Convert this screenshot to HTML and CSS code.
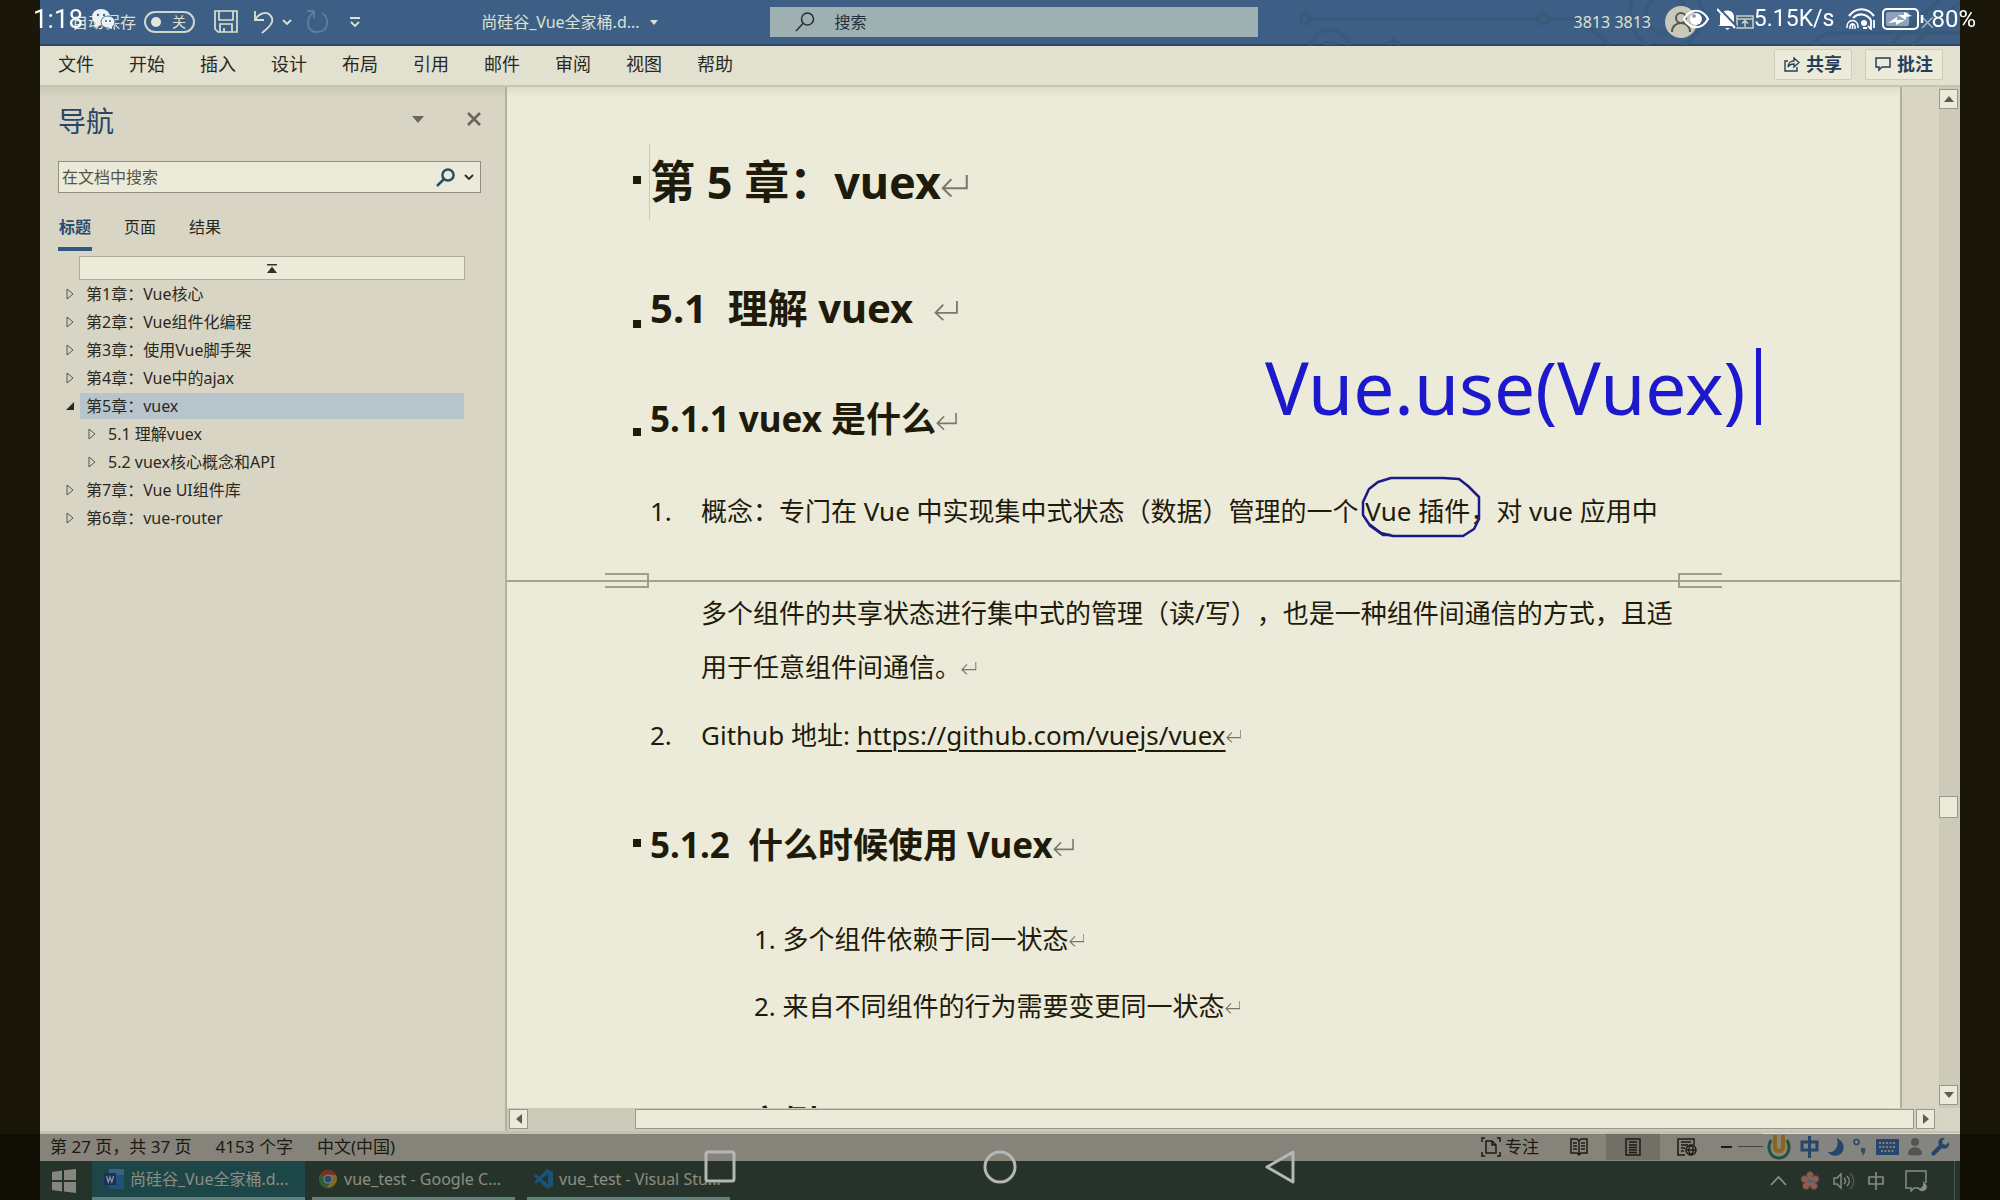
FILE: index.html
```
<!DOCTYPE html>
<html lang="zh-CN">
<head>
    <meta charset="UTF-8">
    <meta name="viewport" content="width=device-width, initial-scale=1.0">
    <title>尚硅谷_Vue全家桶</title>
    <link rel="stylesheet" href="styles.css">
</head>
<body>

    <svg width="0" height="0" class="defs">
        <symbol id="ret" viewBox="0 0 26 22">
            <path d="M25 0V13H2M10 4L1.500 13L10 21" fill="none" stroke="currentColor" stroke-width="2"/>
        </symbol>
        <symbol id="chev" viewBox="0 0 10 6">
            <path d="M1 1l4 4 4-4" fill="none" stroke="currentColor" stroke-width="1.800"/>
        </symbol>
        <symbol id="closed" viewBox="0 0 8 12">
            <path d="M1 1L7 6 1 11z" fill="none" stroke="currentColor"/>
        </symbol>
    </svg>

    <div class="window">

        <!-- Title bar -->
        <header class="titlebar">
            <svg class="circuit" viewBox="0 0 660 45" fill="none" stroke="#3a5a79" stroke-width="4">
                <circle cx="5" cy="19" r="5"/><path d="M11 19H238"/><circle cx="30" cy="50" r="20"/>
                <path d="M24 44h14" stroke-width="6"/><path d="M88 45l6-6 6 6"/><circle cx="243" cy="19" r="5"/>
                <path d="M248 19h32l30 26"/><circle cx="366" cy="14" r="36"/><circle cx="366" cy="14" r="20"/>
                <path d="M515 45q3-12 18-12h127M590 45L640 0M612 45L660 2"/>
            </svg>
            <div class="quick">
                <label class="autosave" for="autosave">自动保存</label>
                <button class="switch" id="autosave"><i></i>关</button>
                <button class="plain save" aria-label="保存">
                    <svg width="24" height="24" viewBox="0 0 24 24" fill="none" stroke="currentColor" stroke-width="1.700"><path d="M1 1h22v21H4l-3-3zM5 1v9h14V1M6 22v-8h12v8M10 22v-4"/></svg>
                </button>
                <button class="plain" aria-label="撤消">
                    <svg width="20" height="24" viewBox="0 0 20 24" fill="none" stroke="currentColor" stroke-width="1.800"><path d="M1 1v9h9M1 10C5 3 12 1 16 5c5 5 2 10-8 18"/></svg>
                </button>
                <svg class="undo-more" width="10" height="6"><use href="#chev"/></svg>
                <button class="plain redo" aria-label="重做">
                    <svg width="22" height="24" viewBox="0 0 22 24" fill="none" stroke="currentColor" stroke-width="1.800"><path d="M1 1h7v7M8 2C0 7-1 22 11 22c12 0 13-14 5-19"/></svg>
                </button>
                <svg class="customize" width="10" height="10" viewBox="0 0 10 10" fill="none" stroke="currentColor" stroke-width="1.800"><path d="M0 1h10M1 5l4 4 4-4"/></svg>
                <span class="filename">尚硅谷_Vue全家桶.d...</span>
                <svg class="file-more" width="8" height="5" viewBox="0 0 8 5"><path d="M0 0h8L4 5z" fill="currentColor"/></svg>
            </div>
            <label class="search">
                <svg width="20" height="20" viewBox="0 0 20 20" fill="none" stroke="#24303c" stroke-width="1.500"><circle cx="12.500" cy="7" r="6"/><path d="M8 11.500L1 19"/></svg>
                <input type="text" placeholder="搜索">
            </label>
            <div class="account">
                <span>3813 3813</span>
                <svg class="avatar" width="32" height="32" viewBox="0 0 32 32"><circle cx="16" cy="16" r="16" fill="#c9c8ba"/><circle cx="16" cy="12" r="5" fill="none" stroke="#55584f" stroke-width="2"/><path d="M7 26c0-12 18-12 18 0" fill="none" stroke="#55584f" stroke-width="2"/></svg>
                <svg class="ribbon-opt" width="18" height="14" viewBox="0 0 18 14" fill="none" stroke="#c8d2c4" stroke-width="1.500"><path d="M1 1h16v12H1zM1 4h16M9 12V6M6 8.500l3-3 3 3"/></svg>
                <svg class="win-close" width="11" height="11" viewBox="0 0 11 11" stroke="#a3b5b4" stroke-width="1.500"><path d="M0 0l11 11M11 0L0 11"/></svg>
            </div>
        </header>

        <!-- Ribbon tabs -->
        <nav class="menu">
            <a href="#">文件</a>
            <a href="#">开始</a>
            <a href="#">插入</a>
            <a href="#">设计</a>
            <a href="#">布局</a>
            <a href="#">引用</a>
            <a href="#">邮件</a>
            <a href="#">审阅</a>
            <a href="#">视图</a>
            <a href="#">帮助</a>
            <div class="menu-right">
                <button class="action">
                    <svg width="16" height="16" viewBox="0 0 16 16" fill="none" stroke="currentColor" stroke-width="1.400"><path d="M4 5H1v10h12v-4M4 11c0-4 3-6 6-6V2l5 4.500L10 11V8c-3 0-5 1-6 3z"/></svg>共享
                </button>
                <button class="action">
                    <svg width="16" height="16" viewBox="0 0 16 16" fill="none" stroke="currentColor" stroke-width="1.500"><path d="M1 2h14v9H7l-3 3v-3H1z"/></svg>批注
                </button>
            </div>
        </nav>

        <main class="main">

            <!-- Navigation pane -->
            <aside class="pane">
                <div class="pane-head">
                    <h2>导航</h2>
                    <button class="plain" aria-label="选项"><svg width="12" height="7" viewBox="0 0 12 7"><path d="M0 0h12L6 7z" fill="currentColor"/></svg></button>
                    <button class="plain" aria-label="关闭"><svg width="14" height="14" viewBox="0 0 14 14" stroke="currentColor" stroke-width="2.600"><path d="M1 1l12 12M13 1L1 13"/></svg></button>
                </div>
                <label class="find">
                    <input type="text" placeholder="在文档中搜索">
                    <svg width="19" height="19" viewBox="0 0 19 19" fill="none" stroke="#2b4c70" stroke-width="2.500"><circle cx="12" cy="7" r="5.600"/><path d="M8 11l-7 7"/></svg>
                    <svg width="10" height="6"><use href="#chev"/></svg>
                </label>
                <div class="tabs">
                    <button class="active">标题</button>
                    <button>页面</button>
                    <button>结果</button>
                </div>
                <button class="to-top" aria-label="跳转到开头"><svg width="10" height="9" viewBox="0 0 10 9"><path d="M0 0h10v1.500H0zM5 2.500L10 9H0z" fill="#35332a"/></svg></button>
                <ul class="tree">
                    <li><svg width="8" height="12"><use href="#closed"/></svg><a href="#">第1章：Vue核心</a></li>
                    <li><svg width="8" height="12"><use href="#closed"/></svg><a href="#">第2章：Vue组件化编程</a></li>
                    <li><svg width="8" height="12"><use href="#closed"/></svg><a href="#">第3章：使用Vue脚手架</a></li>
                    <li><svg width="8" height="12"><use href="#closed"/></svg><a href="#">第4章：Vue中的ajax</a></li>
                    <li class="open"><svg width="8" height="12" viewBox="0 0 8 12"><path d="M8 2v8H0z" fill="#2b291f"/></svg><a href="#">第5章：vuex</a></li>
                    <li class="sub"><svg width="8" height="12"><use href="#closed"/></svg><a href="#">5.1 理解vuex</a></li>
                    <li class="sub"><svg width="8" height="12"><use href="#closed"/></svg><a href="#">5.2 vuex核心概念和API</a></li>
                    <li><svg width="8" height="12"><use href="#closed"/></svg><a href="#">第7章：Vue UI组件库</a></li>
                    <li><svg width="8" height="12"><use href="#closed"/></svg><a href="#">第6章：vue-router</a></li>
                </ul>
            </aside>

            <!-- Document -->
            <div class="editor">
                <div class="canvas">
                    <article class="page">
                        <h1>第 5 章：vuex<svg class="ret"><use href="#ret"/></svg></h1>
                        <h2 class="low">5.1&nbsp; 理解 vuex&nbsp; <svg class="ret"><use href="#ret"/></svg></h2>
                        <h3 class="low">5.1.1 vuex 是什么<svg class="ret"><use href="#ret"/></svg></h3>
                        <div class="item"><span class="num">1.</span><p>概念：专门在 Vue 中实现集中式状态（数据）管理的一个 Vue 插件，对 vue 应用中</p></div>
                        <div class="page-break">
                            <svg width="44" height="16" viewBox="0 0 44 16"><path d="M0 1h43v13H0" /></svg>
                            <svg width="44" height="16" viewBox="0 0 44 16"><path d="M44 1H1v13h43" /></svg>
                        </div>
                        <div class="item"><span class="num"></span><p>多个组件的共享状态进行集中式的管理（读/写），也是一种组件间通信的方式，且适<br>用于任意组件间通信。<svg class="ret"><use href="#ret"/></svg></p></div>
                        <div class="item link"><span class="num">2.</span><p>Github 地址: <a href="#">https://github.com/vuejs/vuex</a><svg class="ret"><use href="#ret"/></svg></p></div>
                        <h3 class="when">5.1.2&nbsp; 什么时候使用 Vuex<svg class="ret"><use href="#ret"/></svg></h3>
                        <p class="reason">1. 多个组件依赖于同一状态<svg class="ret"><use href="#ret"/></svg></p>
                        <p class="reason">2. 来自不同组件的行为需要变更同一状态<svg class="ret"><use href="#ret"/></svg></p>
                        <h3 class="next">5.1.3&nbsp; 案例</h3>

                        <!-- Pen annotations -->
                        <div class="note">Vue.use(Vuex)</div>
                        <svg class="ring" width="120" height="62" viewBox="0 0 120 62" fill="none" stroke="#1c1a86" stroke-width="2.500"><path d="M30 2H82l16 1 9 7 11 11v22l-5 10-11 7H32L20 57 8 48 2 39V26l6-13 9-7z" stroke-linejoin="round"/><path d="M8 49l14 10h8"/></svg>
                    </article>
                    <div class="gutter"></div>
                    <div class="vscroll">
                        <button aria-label="向上"><svg width="10" height="6" viewBox="0 0 10 6"><path d="M5 0l5 6H0z"/></svg></button>
                        <div class="vthumb"></div>
                        <button aria-label="向下"><svg width="10" height="6" viewBox="0 0 10 6"><path d="M0 0h10L5 6z"/></svg></button>
                    </div>
                </div>
                <div class="hscroll">
                    <button aria-label="向左"><svg width="6" height="10" viewBox="0 0 6 10"><path d="M6 0v10L0 5z"/></svg></button>
                    <div class="hthumb"></div>
                    <button aria-label="向右"><svg width="6" height="10" viewBox="0 0 6 10"><path d="M0 0l6 5-6 5z"/></svg></button>
                </div>
            </div>
        </main>

        <!-- Status bar -->
        <footer class="status">
            <span>第 27 页，共 37 页</span>
            <span>4153 个字</span>
            <span>中文(中国)</span>
            <div class="views">
                <button class="focus"><svg width="20" height="20" viewBox="0 0 20 20" fill="none" stroke="currentColor" stroke-width="1.500"><path d="M1 5V1h3M16 1h3v4M1 15v4h3M16 19h3v-4M5 4h6l4 4v8H5zM11 4v4h4"/></svg>专注</button>
                <button class="view" aria-label="阅读视图"><svg width="18" height="18" viewBox="0 0 18 18" fill="none" stroke="currentColor" stroke-width="1.500"><path d="M9 3L7 1H1v14h6l2 2 2-2h6V1h-6L9 3v14M3 5h4M3 8h4M3 11h4M11 5h4M11 8h4M11 11h4"/></svg></button>
                <button class="view current" aria-label="页面视图"><svg width="16" height="18" viewBox="0 0 16 18" fill="none" stroke="currentColor" stroke-width="1.500"><path d="M1 1h14v16H1zM4 4h8M4 7h8M4 9.500h8M4 12h8M4 14.500h8"/></svg></button>
                <button class="view" aria-label="Web 版式"><svg width="20" height="18" viewBox="0 0 20 18" fill="none" stroke="currentColor" stroke-width="1.500"><path d="M8 17H1V1h16v6M4 4h10M4 7h7M4 10h4M4 13h3"/><circle cx="14" cy="12" r="5"/><path d="M9 12h10M14 7c-3 3-3 7 0 10M14 7c3 3 3 7 0 10"/></svg></button>
                <span class="zoom-out"></span><span class="zoom-line"></span>
            </div>
            <div class="ime">
                <svg width="24" height="26" viewBox="0 0 24 26" fill="none"><path d="M4 6c-5 9 0 18 8 18s13-9 8-18" stroke="#3c8a5c" stroke-width="3"/><path d="M8 1v12q0 4 4 4t4-4V1" stroke="#eda52c" stroke-width="4"/></svg>
                <svg width="19" height="22" viewBox="0 0 19 22" fill="none" stroke="#4176b4" stroke-width="3"><path d="M2 6h15v8H2zM9.500 0v22"/></svg>
                <svg width="16" height="18" viewBox="0 0 16 18"><path d="M9 0c8 4 9 13 2 17-5 2-9 0-11-3 7 1 11-5 9-14z" fill="#4176b4"/></svg>
                <svg width="13" height="18" viewBox="0 0 13 18"><circle cx="3.500" cy="4" r="2.500" fill="none" stroke="#4176b4" stroke-width="1.500"/><path d="M8 10h4c1 4-1 7-3 8 1-2 1-3-1-4z" fill="#5b7f9f"/></svg>
                <svg width="23" height="16" viewBox="0 0 23 16"><rect width="23" height="16" fill="#4176b4"/><path d="M3 4h17M3 8h17M5 12h13" stroke="#d5d5cc" stroke-width="2" stroke-dasharray="2 1.500"/></svg>
                <svg width="14" height="18" viewBox="0 0 14 18" fill="#8f8c81"><circle cx="7" cy="4" r="4"/><path d="M0 16c0-9 14-9 14 0 0 2-14 2-14 0z"/></svg>
                <svg width="18" height="18" viewBox="0 0 18 18"><path d="M14 0l-3 3 1 3 3 1 3-3c1 5-3 8-7 6l-7 7c-2 2-5-1-3-3l7-7c-2-4 1-8 6-7z" fill="#4176b4"/></svg>
            </div>
        </footer>

        <!-- Taskbar -->
        <div class="taskbar">
            <button class="start" aria-label="开始"><svg width="24" height="24" viewBox="0 0 24 24" fill="#e0ded3"><path d="M0 3l10-1.500V11H0zM12 1.300L24 0v11H12zM0 13h10v9.500L0 21zM12 13h12v11l-12-1.500z"/></svg></button>
            <button class="task selected"><svg width="20" height="20" viewBox="0 0 20 20"><path d="M5 0h15v20H5z" fill="#3c86c8"/><path d="M5 0h15v6H5z" fill="#5ca6de"/><path d="M0 4h12v12H0z" fill="#21549c"/><path d="M2.500 7l1.800 6L6 8l1.800 5 1.800-6" fill="none" stroke="#eee" stroke-width="1.300"/></svg>尚硅谷_Vue全家桶.d...</button>
            <button class="task"><svg width="20" height="20" viewBox="0 0 20 20"><circle cx="10" cy="10" r="9" fill="#d8b23c"/><path d="M10 10L2 5.500C6-1 15 0 18 6h-8z" fill="#cf4f3b"/><path d="M10 10L2 5.500C-1 11 3 19 9 19l4-7z" fill="#4d9b57"/><circle cx="10" cy="10" r="4.500" fill="#ddd"/><circle cx="10" cy="10" r="3.500" fill="#4279c2"/></svg>vue_test - Google C...</button>
            <button class="task"><svg width="20" height="20" viewBox="0 0 20 20"><path d="M14 0l6 3v14l-6 3L3 9 1 7l2-2 12 10V5L3 15l-2-2z" fill="#2e8bc4"/></svg>vue_test - Visual Stu...</button>
            <div class="tray">
                <svg width="17" height="10" viewBox="0 0 17 10" fill="none" stroke="currentColor" stroke-width="1.800"><path d="M1 9l7.500-8L16 9"/></svg>
                <svg width="20" height="20" viewBox="0 0 20 20" fill="#dfa195" stroke="#bd5d50"><circle cx="10" cy="4" r="3.500"/><circle cx="15.500" cy="8" r="3.500"/><circle cx="14" cy="15" r="3.500"/><circle cx="6" cy="15" r="3.500"/><circle cx="4.500" cy="8" r="3.500"/><circle cx="10" cy="10" r="5" stroke="none"/><path d="M7 10h6" stroke="#8ba4ad" stroke-width="3"/></svg>
                <svg width="22" height="18" viewBox="0 0 22 18" fill="none" stroke="currentColor" stroke-width="1.400"><path d="M1 6h3l4-4v14l-4-4H1zM11 6c2 2 2 4 0 6M14 4c3 3 3 7 0 10"/><path d="M17 1c5 5 5 11 0 16" opacity="0.4"/></svg>
                <svg width="16" height="18" viewBox="0 0 16 18" fill="none" stroke="currentColor" stroke-width="1.600"><path d="M1 5h14v7H1zM8 0v18"/></svg>
                <svg width="22" height="22" viewBox="0 0 22 22" fill="none" stroke="currentColor" stroke-width="1.500"><path d="M14 18H9l-3 3v-3H1V1h20v12"/><path d="M19 13c0 4-2 6-5 6 3 3 8 1 7-3z" fill="currentColor"/></svg>
            </div>
        </div>
    </div>

    <!-- Phone status icons -->
    <div class="phone-left">
        <span class="clock">1:18</span>
        <svg width="23" height="20" viewBox="0 0 23 20"><ellipse cx="9" cy="8" rx="9" ry="8" fill="#eef2f4"/><ellipse cx="16" cy="13" rx="7" ry="6" fill="#eef2f4" stroke="#54749a"/><path d="M2 19l2-6 5 3zM20 20l-5-2 5-3z" fill="#eef2f4"/><circle cx="6" cy="6" r="1.200" fill="#46668e"/><circle cx="12" cy="6" r="1.200" fill="#46668e"/><circle cx="14" cy="12" r="1" fill="#46668e"/><circle cx="18" cy="12" r="1" fill="#46668e"/></svg>
    </div>
    <div class="phone-right">
        <svg width="26" height="20" viewBox="0 0 26 20"><path d="M1 10C7-1 19-1 25 10 19 21 7 21 1 10z" fill="none" stroke="#fff" stroke-width="2.200"/><circle cx="13" cy="10" r="6" fill="#fff"/><circle cx="11" cy="7" r="2" fill="#91a4b5"/></svg>
        <svg class="bell" width="21" height="22" viewBox="0 0 21 22"><path d="M3 17V9c0-8 14-9 14 0v8l2 1H1zM8 20h5l-2.500 2z" fill="#fff"/><path d="M2 0l18 19" stroke="#3d5f86" stroke-width="2"/><path d="M0 1l18 19" stroke="#fff" stroke-width="2"/></svg>
        <span class="rate">5.15K/s</span>
        <svg class="wifi" width="30" height="22" viewBox="0 0 30 22" fill="none" stroke="#fff" stroke-width="2.200"><path d="M3 8C10-1 21-1 28 8M7 10c5-5 13-5 18 2"/><path d="M1 20c-1-10 12-10 11 0M4 21c-1-7 6-7 5 0M6.500 16v5" stroke-width="1.500"/><circle cx="18" cy="15" r="3" fill="#fff" stroke="none"/><path d="M17 20h4M25 12v9l-3-3M28 20v-8" stroke-width="1.800"/></svg>
        <svg width="43" height="22" viewBox="0 0 43 22"><rect x="1" y="1" width="35" height="20" rx="4" fill="none" stroke="#fff" stroke-width="2"/><rect x="4" y="4" width="23" height="14" rx="2" fill="#8ea3bb"/><path d="M6 15l9-6v3h8l-9 5v-3zM30 8l-8-4v3h-6l8 5v-3z" fill="#fff"/><path d="M40 7v8" stroke="#fff" stroke-width="2.500"/></svg>
        <span>80%</span>
    </div>

    <!-- Phone navigation bar -->
    <div class="phone-nav">
        <button aria-label="最近"><svg width="32" height="34" viewBox="0 0 32 34"><rect x="2" y="2" width="28" height="29" rx="2"/></svg></button>
        <button aria-label="主页"><svg width="34" height="34" viewBox="0 0 34 34"><circle cx="17" cy="17" r="15"/></svg></button>
        <button aria-label="返回"><svg width="32" height="34" viewBox="0 0 32 34"><path d="M29 2v30L3 17z" stroke-linejoin="round"/></svg></button>
    </div>

</body>
</html>
```
FILE: styles.css
```
* {
    box-sizing: border-box;
}
body {
    margin: 0;
    background: #1b1708;
    color: #2b291f;
    font-family: "Noto Sans", "Noto Sans CJK SC", sans-serif;
    font-size: 16px;
    line-height: 24px;
    text-spacing-trim: space-all;
}
button, input {
    font: inherit;
    color: inherit;
    border: none;
    background: none;
    padding: 0;
    outline: none;
}
a {
    color: inherit;
    text-decoration: none;
}
svg {
    display: block;
    flex-shrink: 0;
}
.defs {
    position: absolute;
}
.window {
    display: flex;
    flex-direction: column;
    height: 100vh;
    margin: 0 40px;
    overflow: hidden;
}

/* Title bar */
.titlebar {
    position: relative;
    display: grid;
    grid-template-columns: 38% 488px 1fr;
    align-items: center;
    height: 46px;
    flex-shrink: 0;
    background: #3d5f86;
    border-bottom: 2px solid #2b4766;
    color: #dde0d0;
}
.circuit {
    position: absolute;
    right: 0;
    top: 0;
    width: 660px;
    height: 45px;
}
.quick {
    display: flex;
    align-items: center;
    padding-left: 32px;
    height: 42px;
}
.autosave {
    margin-right: 8px;
}
.switch {
    display: flex;
    align-items: center;
    justify-content: space-between;
    width: 51px;
    height: 22px;
    padding: 0 7px 0 5px;
    border: 2px solid #d0d6cb;
    border-radius: 11px;
    font-size: 14px;
    line-height: 18px;
}
.switch i {
    width: 10px;
    height: 10px;
    border-radius: 50%;
    background: #e6e6d8;
}
.save {
    margin: 0 16px 0 19px;
}
.undo-more {
    margin: 0 14px 0 8px;
}
.redo {
    color: #5d7fa3;
}
.customize {
    margin-left: 22px;
}
.filename {
    margin-left: auto;
}
.file-more {
    margin: 0 112px 0 10px;
}
.search {
    display: flex;
    align-items: center;
    gap: 20px;
    height: 30px;
    padding: 0 25px;
    background: #9fb0b2;
    position: relative;
}
.search input {
    flex: 1;
}
.search input::placeholder {
    color: #24303c;
    opacity: 1;
}
.account {
    position: relative;
    display: flex;
    align-items: center;
    justify-content: flex-end;
    padding-right: 27px;
}
.avatar {
    margin: 0 39px 0 14px;
}
.win-close {
    margin-left: 168px;
}

/* Ribbon tabs */
.menu {
    display: flex;
    align-items: center;
    gap: 35px;
    height: 41px;
    flex-shrink: 0;
    padding: 0 17px 3px 18px;
    background: #e2e0cf;
    border-bottom: 2px solid #c6c3b1;
    font-size: 18px;
}
.menu-right {
    display: flex;
    gap: 13px;
    margin-left: auto;
}
.action {
    display: flex;
    align-items: center;
    justify-content: center;
    gap: 6px;
    width: 78px;
    height: 31px;
    border: 1px solid #d0cdbb;
    border-radius: 2px;
    background: #ecead9;
    color: #253e5c;
    font-weight: bold;
}

.main {
    display: flex;
    flex: 1;
    min-height: 0;
    border-bottom: 3px solid #c4c1af;
}

/* Navigation pane */
.pane {
    width: 467px;
    flex-shrink: 0;
    padding: 0 24px 0 18px;
    background: linear-gradient(#cbc8b6, #d8d5c4 10px);
    border-right: 2px solid #b3b09f;
}
.pane-head {
    display: flex;
    align-items: center;
    gap: 43px;
    height: 74px;
    padding-bottom: 10px;
    color: #6a675a;
}
.pane-head h2 {
    margin: 4px auto 0 0;
    color: #2b4565;
    font-size: 28px;
    font-weight: normal;
}
.find {
    display: flex;
    align-items: center;
    gap: 9px;
    height: 32px;
    padding: 0 6px 0 3px;
    background: #ecead9;
    border: 1px solid #918e7f;
}
.find input {
    flex: 1;
}
.find input::placeholder {
    color: #57554a;
    opacity: 1;
}
.tabs {
    display: flex;
    gap: 31px;
    margin-top: 22px;
}
.tabs button {
    height: 36px;
    padding: 0 1px 12px;
}
.tabs .active {
    border-bottom: 4px solid #345980;
    padding-bottom: 8px;
    color: #2b4c70;
    font-weight: bold;
}
.to-top {
    display: flex;
    align-items: center;
    justify-content: center;
    width: calc(100% - 37px);
    height: 24px;
    margin: 5px 0 0 21px;
    background: #ecead9;
    border: 1px solid #b0ad9b;
}
.tree {
    list-style: none;
    margin: 0 17px 0 8px;
    padding: 0;
}
.tree li {
    display: flex;
    align-items: center;
    gap: 6px;
    height: 28px;
}
.tree li svg {
    color: #57554a;
}
.tree a {
    flex: 1;
    padding-left: 6px;
    line-height: 26px;
}
.tree .sub {
    padding-left: 22px;
}
.tree .open a {
    background: #b8c4cb;
}

/* Document */
.editor {
    display: flex;
    flex-direction: column;
    flex: 1;
    min-width: 0;
}
.canvas {
    display: flex;
    flex: 1;
    min-height: 0;
}
.page {
    position: relative;
    flex: 1;
    min-width: 0;
    padding: 57px 0 0 143px;
    overflow: hidden;
    background: linear-gradient(#dedccb, #ecead9 10px);
    color: #1f1b0b;
    font-size: 26px;
    line-height: 54px;
    white-space: nowrap;
}
.page h1, .page h2, .page h3 {
    position: relative;
    margin: 0;
}
.page h1 {
    box-shadow: -1px 0 #cbc8b7;
    font-size: 45px;
    line-height: 76px;
}
.page h2 {
    margin-top: 58px;
    font-size: 40px;
    line-height: 60px;
}
.page h3 {
    margin-top: 54px;
    font-size: 35px;
    line-height: 54px;
}
.page h1::before, .page h2::before, .page h3::before {
    content: "";
    position: absolute;
    left: -17px;
    top: calc(50% - 6px);
    width: 8px;
    height: 8px;
    background: #1f1b0b;
}
.page .low::before {
    top: auto;
    bottom: 10px;
}
.page p {
    margin: 0;
}
.ret {
    display: inline-block;
    width: 0.6em;
    height: 0.5em;
    margin-bottom: 2px;
    color: #7b786a;
}
.item {
    display: flex;
}
.num {
    width: 51px;
    flex-shrink: 0;
}
.low + .item {
    margin-top: 38px;
}
.page-break {
    display: flex;
    justify-content: space-between;
    margin: 35px 0 0 -143px;
    padding: 0 178px 0 98px;
    height: 16px;
    background: linear-gradient(#a5a291, #a5a291) 0 7px / 100% 2px no-repeat;
}
.page-break path {
    fill: none;
    stroke: #a09d8d;
    stroke-width: 2px;
}
.page-break + .item {
    margin-top: -3px;
}
.link {
    margin-top: 14px;
}
.link a {
    text-decoration: underline;
    text-decoration-thickness: 2px;
    text-underline-offset: 5px;
}
.page .when {
    margin: 56px 0 40px;
}
.reason {
    padding: 0 0 13px 104px;
}
.page .next {
    margin-top: 50px;
}
.note {
    position: absolute;
    left: 758px;
    top: 261px;
    padding-right: 10px;
    border-right: 5px solid #1c18cc;
    color: #1c18cc;
    font-size: 73px;
    line-height: 77px;
}
.ring {
    position: absolute;
    left: 854px;
    top: 389px;
}
.gutter {
    width: 39px;
    background: #d8d5c4;
    border-left: 2px solid #b3b09f;
}

/* Scroll bars */
.vscroll {
    display: flex;
    flex-direction: column;
    width: 21px;
    padding: 2px 2px 3px 0;
    background: #cdcab9;
}
.vscroll button, .hscroll button {
    display: flex;
    align-items: center;
    justify-content: center;
    width: 19px;
    height: 20px;
    flex-shrink: 0;
    background: #ecead9;
    border: 1px solid #99968a;
    fill: #5f5c50;
}
.vthumb {
    height: 22px;
    margin: 687px 0 auto;
    background: #ecead9;
    border: 1px solid #99968a;
}
.hscroll {
    display: flex;
    height: 23px;
    padding: 1px 25px 2px 2px;
    background: linear-gradient(90deg, #cdcab9 94%, #d8d5c4 99%);
}
.hthumb {
    flex: 1;
    margin: 0 2px 0 107px;
    background: #ecead9;
    border: 1px solid #99968a;
}

/* Status bar */
.status {
    display: flex;
    align-items: center;
    gap: 24px;
    height: 27px;
    flex-shrink: 0;
    padding: 0 0 2px 10px;
    background: #e0dccb;
    color: #2f2c1f;
    font-size: 17px;
}
.views {
    display: flex;
    align-items: center;
    height: 27px;
    margin-left: auto;
    margin-right: -24px;
}
.focus {
    display: flex;
    align-items: center;
    gap: 4px;
    margin-right: 13px;
}
.view {
    display: flex;
    align-items: center;
    justify-content: center;
    width: 54px;
    height: 27px;
}
.view.current {
    background: #bcb9aa;
}
.zoom-out {
    width: 11px;
    height: 2px;
    margin: 0 6px 0 7px;
    background: #2f2c1f;
}
.zoom-line {
    width: 25px;
    height: 1px;
    background: #77746a;
}
.ime {
    display: flex;
    align-items: center;
    justify-content: space-between;
    width: 197px;
    height: 27px;
    padding: 0 11px 0 4px;
    background: #dddcd6;
}

/* Taskbar */
.taskbar {
    display: flex;
    height: 39px;
    flex-shrink: 0;
    background: #3e5548;
    color: #eae8dc;
}
.start {
    display: flex;
    align-items: center;
    justify-content: center;
    width: 52px;
    padding-right: 4px;
}
.task {
    display: flex;
    align-items: center;
    gap: 6px;
    width: 203px;
    margin-right: 12px;
    padding-left: 6px;
    border-bottom: 3px solid #9ed6cf;
    white-space: nowrap;
}
.task.selected {
    width: 213px;
    margin-right: 7px;
    padding-left: 12px;
    background: #2f7678;
}
.tray {
    display: flex;
    align-items: center;
    gap: 13px;
    margin-left: auto;
    margin-right: 5px;
    padding-right: 27px;
    border-right: 1px solid #7d8a81;
}
.tray svg:last-child {
    margin-left: 8px;
}

/* Phone overlay */
.phone-left, .phone-right {
    position: fixed;
    top: 0;
    display: flex;
    align-items: center;
    height: 38px;
    color: #fff;
    font-family: Roboto, sans-serif;
    font-size: 24px;
}
.phone-left {
    left: 33px;
    gap: 9px;
}
.clock {
    font-size: 26px;
}
.phone-right {
    right: 24px;
    gap: 6px;
}
.phone-right .bell {
    margin: 0 10px 0 2px;
}
.rate {
    font-size: 23px;
}
.wifi {
    margin-left: 6px;
}
.phone-nav {
    position: fixed;
    left: 0;
    right: 0;
    bottom: 0;
    display: flex;
    align-items: center;
    justify-content: center;
    gap: 247px;
    height: 66px;
    background: rgba(0, 0, 0, 0.4);
}
.phone-nav svg {
    fill: none;
    stroke: #b6b6b6;
    stroke-width: 3px;
}
```
